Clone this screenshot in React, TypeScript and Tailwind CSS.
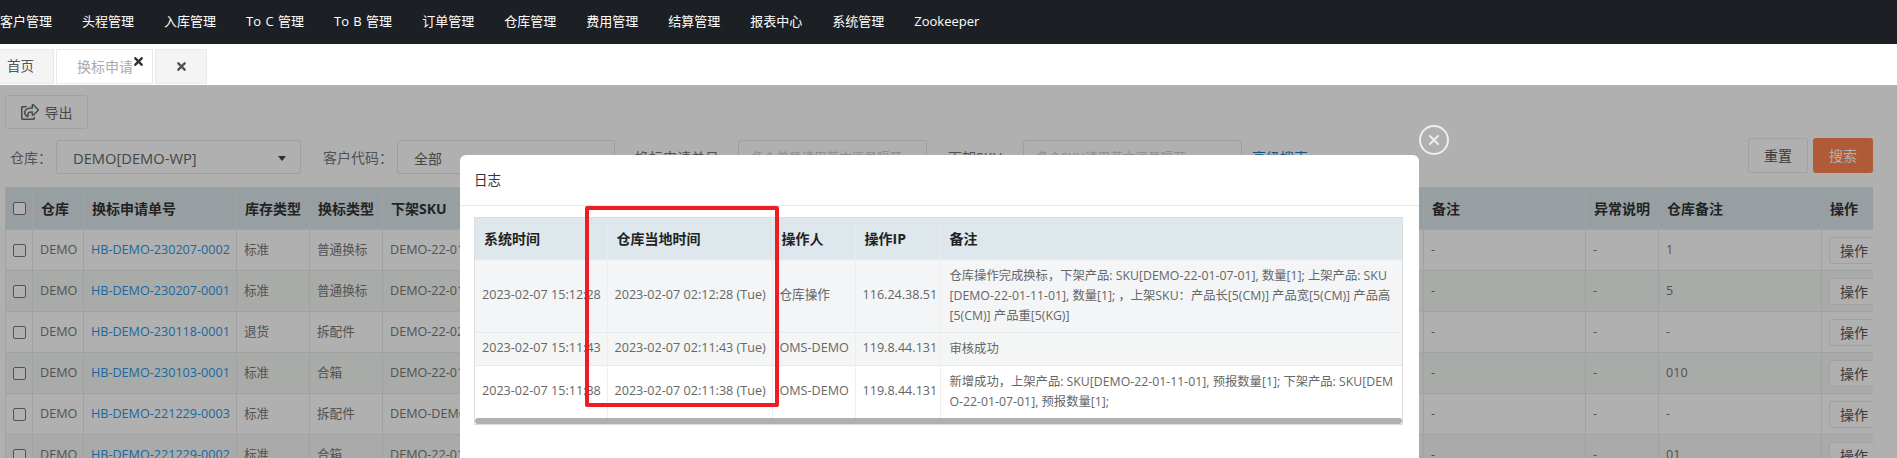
// App.tsx
import { FaRegShareSquare, FaTimes } from 'react-icons/fa'
import { X } from 'lucide-react'

const font = { fontFamily: '"Open Sans", "Noto Sans CJK SC", sans-serif' }

const navItems = ['客户管理', '头程管理', '入库管理', 'To C 管理', 'To B 管理', '订单管理', '仓库管理', '费用管理', '结算管理', '报表中心', '系统管理', 'Zookeeper']

const rows = [
  { no: 'HB-DEMO-230207-0002', stock: '标准', type: '普通换标', sku: 'DEMO-22-01-07-01', note: '1' },
  { no: 'HB-DEMO-230207-0001', stock: '标准', type: '普通换标', sku: 'DEMO-22-01-07-01', note: '5' },
  { no: 'HB-DEMO-230118-0001', stock: '退货', type: '拆配件', sku: 'DEMO-22-02-03-01', note: '-' },
  { no: 'HB-DEMO-230103-0001', stock: '标准', type: '合箱', sku: 'DEMO-22-01-07-01', note: '010' },
  { no: 'HB-DEMO-221229-0003', stock: '标准', type: '拆配件', sku: 'DEMO-DEMO-01', note: '-' },
  { no: 'HB-DEMO-221229-0002', stock: '标准', type: '合箱', sku: 'DEMO-22-01-07-01', note: '01' },
]

const logs = [
  {
    bg: 'bg-[#f3f5f6]',
    h: 'h-[73px]',
    sys: '2023-02-07 15:12:28',
    local: '2023-02-07 02:12:28 (Tue)',
    user: '仓库操作',
    ip: '116.24.38.51',
    lines: ['仓库操作完成换标，下架产品: SKU[DEMO-22-01-07-01], 数量[1]; 上架产品: SKU', '[DEMO-22-01-11-01], 数量[1]; ，上架SKU：产品长[5(CM)] 产品宽[5(CM)] 产品高', '[5(CM)] 产品重[5(KG)]'],
  },
  {
    bg: 'bg-[#f3f6f5]',
    h: 'h-[33px]',
    sys: '2023-02-07 15:11:43',
    local: '2023-02-07 02:11:43 (Tue)',
    user: 'OMS-DEMO',
    ip: '119.8.44.131',
    lines: ['审核成功'],
  },
  {
    bg: 'bg-white',
    h: 'h-[53px]',
    sys: '2023-02-07 15:11:38',
    local: '2023-02-07 02:11:38 (Tue)',
    user: 'OMS-DEMO',
    ip: '119.8.44.131',
    lines: ['新增成功，上架产品: SKU[DEMO-22-01-11-01], 预报数量[1]; 下架产品: SKU[DEM', 'O-22-01-07-01], 预报数量[1];'],
  },
]

const thBg = 'border border-[#e7eaec] px-2 text-left text-[14px] font-bold text-[#333] whitespace-nowrap'
const tdBg = 'border border-[#e7eaec] px-[7px] text-[12.6px] text-[#777] whitespace-nowrap overflow-hidden'
const inputCls = 'h-[34px] rounded-[3px] border border-[#e5e6e7] bg-white px-3 text-[12.6px] placeholder:text-[#ccc]'

export default function App() {
  return (
    <div style={font} className="relative h-[458px] overflow-hidden bg-white">
      <div className="flex h-11 items-center gap-[30px] bg-[#1c2024] text-[13px] text-white [word-spacing:1px]">
        {navItems.map((item) => (
          <span key={item}>{item}</span>
        ))}
      </div>

      <div className="flex h-[41px] gap-[2px] bg-white pt-[5px]">
        <div className="flex h-[35px] w-[54px] items-center border border-l-0 border-[#e7eaec] bg-[#f4f4f4] pl-[7px] text-[13.5px] text-[#555]">首页</div>
        <div className="relative flex h-[35px] w-[97px] items-center border border-[#e7eaec] bg-white pl-5 text-[14px] text-[#aaa]">
          换标申请
          <FaTimes className="absolute right-[7px] top-[5px] text-[13px] text-[#333]" />
        </div>
        <div className="flex h-[35px] w-[52px] items-center justify-center border border-[#e7eaec] bg-[#f4f4f4]">
          <FaTimes className="text-[13px] text-[#555]" />
        </div>
      </div>

      <div className="px-[5px] pt-[10px]">
        <button className="flex h-[34px] w-[83px] items-center justify-center gap-[6px] rounded-[3px] border border-[#e7eaec] bg-white text-[14px] text-[#676a6c]">
          <FaRegShareSquare className="text-[18px]" />
          导出
        </button>

        <div className="mt-[11px] flex h-[35px] w-[1868px] items-start text-[14px] text-[#777]">
          <label className="ml-[5px] w-[46px] pt-[7px]">仓库：</label>
          <div className="flex h-[34px] w-[245px] items-center justify-between rounded-[3px] border border-[#e5e6e7] bg-white pl-4 pr-[14px] pt-[2px] text-[14.7px] text-[#666]">
            DEMO[DEMO-WP]
            <svg width="8" height="5" viewBox="0 0 8 5" className="text-[#444]">
              <path d="M0 0h8L4 5z" fill="currentColor" />
            </svg>
          </div>
          <label className="ml-[22px] w-[74px] pt-[7px]">客户代码：</label>
          <div className="flex h-[34px] w-[218px] items-center rounded-[3px] border border-[#e5e6e7] bg-white pl-4 pt-[2px] text-[#666]">全部</div>
          <label className="ml-5 w-[103px] pt-[7px]">换标申请单号</label>
          <input className={`${inputCls} w-[189px]`} placeholder="多个单号请用英文逗号隔开" />
          <label className="ml-[21px] w-[75px] pt-[7px]">下架SKU</label>
          <input className={`${inputCls} w-[219px]`} placeholder="多个SKU请用英文逗号隔开" />
          <a className="ml-[10px] pt-[7px] text-[#1a7bb9]">高级搜索</a>
          <div className="ml-auto flex gap-[5px] -mt-[2px]">
            <button className="h-[35px] w-[60px] rounded-[3px] border border-[#e7eaec] bg-white text-[#555]">重置</button>
            <button className="h-[35px] w-[60px] rounded-[3px] bg-[#ff8351] text-white">搜索</button>
          </div>
        </div>

        <div className="mt-3 w-[1868px] overflow-hidden">
          <table className="w-[1868px] table-fixed border-collapse">
            <colgroup>
              <col className="w-[27px]" />
              <col className="w-[51px]" />
              <col className="w-[153px]" />
              <col className="w-[73px]" />
              <col className="w-[73px]" />
              <col className="w-[1041px]" />
              <col className="w-[162px]" />
              <col className="w-[73px]" />
              <col className="w-[163px]" />
              <col className="w-[52px]" />
            </colgroup>
            <thead>
              <tr className="h-[42px] bg-[#dde7ec]">
                <th className={`${thBg} !px-[7px]`}>
                  <span className="block h-[13px] w-[13px] rounded-[2px] border border-[#777] bg-white" />
                </th>
                <th className={thBg}>仓库</th>
                <th className={thBg}>换标申请单号</th>
                <th className={thBg}>库存类型</th>
                <th className={thBg}>换标类型</th>
                <th className={thBg}>下架SKU</th>
                <th className={thBg}>备注</th>
                <th className={thBg}>异常说明</th>
                <th className={thBg}>仓库备注</th>
                <th className={thBg}>操作</th>
              </tr>
            </thead>
            <tbody>
              {rows.map((row, index) => (
                <tr key={row.no} className={`h-[41px] ${index % 2 === 1 ? 'bg-[#f5f8f5]' : 'bg-white'}`}>
                  <td className={tdBg}>
                    <span className="block h-[13px] w-[13px] rounded-[2px] border border-[#777] bg-white" />
                  </td>
                  <td className={tdBg}>DEMO</td>
                  <td className={`${tdBg} !text-[#2b95ea]`}>{row.no}</td>
                  <td className={tdBg}>{row.stock}</td>
                  <td className={tdBg}>{row.type}</td>
                  <td className={tdBg}>{row.sku}</td>
                  <td className={tdBg}>-</td>
                  <td className={tdBg}>-</td>
                  <td className={tdBg}>{row.note}</td>
                  <td className={tdBg}>
                    <button className="h-[27px] w-[60px] rounded-[3px] border border-[#e7eaec] bg-white text-left pl-[10px] text-[14px] text-[#555]">操作</button>
                  </td>
                </tr>
              ))}
            </tbody>
          </table>
        </div>
      </div>

      {/* modal layer */}
      <div className="absolute inset-x-0 bottom-0 top-[85px] bg-black/[0.31]" />

      <div className="absolute left-[1419px] top-[125px] flex h-[30px] w-[30px] items-center justify-center rounded-full border-2 border-[#eee]">
        <X size={16} strokeWidth={3} className="text-[#eee]" />
      </div>

      <div className="absolute left-[460px] top-[155px] h-[320px] w-[959px] rounded-md bg-white">
        <div className="flex h-[51px] items-center border-b border-[#e7eaec] pl-[14px] text-[13.5px] text-[#333]">日志</div>
        <div className="ml-[14px] mt-[11px] w-[929px] border border-[#ddd]">
          <table className="w-full table-fixed border-collapse">
            <colgroup>
              <col className="w-[132px]" />
              <col className="w-[165px]" />
              <col className="w-[83px]" />
              <col className="w-[85px]" />
              <col />
            </colgroup>
            <thead>
              <tr className="h-[41px] bg-[#dde7ec]">
                {['系统时间', '仓库当地时间', '操作人', '操作IP', '备注'].map((title) => (
                  <th key={title} className="border-x border-[#e7eaec] first:border-l-0 last:border-r-0 px-[9px] text-left text-[14px] font-bold text-[#222]">{title}</th>
                ))}
              </tr>
            </thead>
            <tbody>
              {logs.map((log) => (
                <tr key={log.sys} className={`${log.h} ${log.bg} border-t border-[#e7eaec] text-[12.6px] text-[#666]`}>
                  <td className="border-r border-[#eee] px-[7px] whitespace-nowrap">{log.sys}</td>
                  <td className="border-r border-[#eee] px-[7px] whitespace-nowrap">{log.local}</td>
                  <td className="border-r border-[#eee] px-[7px] whitespace-nowrap">{log.user}</td>
                  <td className="border-r border-[#eee] px-[7px] whitespace-nowrap">{log.ip}</td>
                  <td className="pl-[9px] pr-[7px] text-[12.3px] leading-5 whitespace-nowrap">
                    {log.lines.map((line) => (
                      <div key={line}>{line}</div>
                    ))}
                  </td>
                </tr>
              ))}
            </tbody>
          </table>
          <div className="h-[6px] rounded-[3px] bg-[#b0b0b0]" />
        </div>
      </div>

      {/* red highlight drawn on the screenshot */}
      <div className="absolute left-[585px] top-[206px] h-[201px] w-[194px] rounded-[2px] border-4 border-[#ee1c25]" />
    </div>
  )
}
